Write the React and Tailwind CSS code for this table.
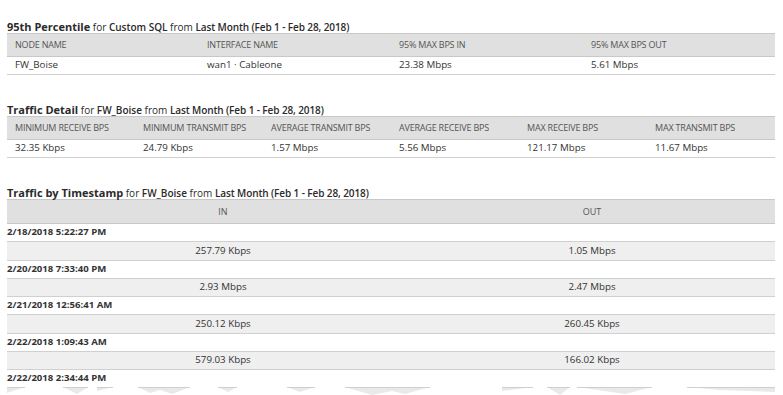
import React from "react";

const F = "font-['Open_Sans','Liberation_Sans',sans-serif]";

function Title({ main, node }) {
  return (
    <div className="h-[15px] leading-[15px] whitespace-nowrap text-[#2a2a2a]">
      <span className="text-[11px] font-bold">{main}</span>
      <span className="text-[10px]"> for </span>
      <span className="text-[10px] font-semibold">{node}</span>
      <span className="text-[10px]"> from </span>
      <span className="text-[10px] font-semibold tracking-[-0.1px]">Last Month (Feb 1 - Feb 28, 2018)</span>
    </div>
  );
}

function SimpleTable({ cols, headers, values }) {
  return (
    <div>
      <div className={`grid ${cols} h-[24px] items-center bg-[#e0e0e0] border-t border-b border-[#c8c8c8] text-[9px] text-[#555] tracking-[-0.2px]`}>
        {headers.map((h) => (
          <div key={h} className="pl-[8px] whitespace-nowrap">{h}</div>
        ))}
      </div>
      <div className={`grid ${cols} h-[18px] items-center border-b border-[#d0d0d0] text-[9.75px] text-[#333]`}>
        {values.map((v, i) => (
          <div key={i} className="pl-[8px] whitespace-nowrap">{v}</div>
        ))}
      </div>
    </div>
  );
}

const stamps = [
  ["2/18/2018 5:22:27 PM", "257.79 Kbps", "1.05 Mbps"],
  ["2/20/2018 7:33:40 PM", "2.93 Mbps", "2.47 Mbps"],
  ["2/21/2018 12:56:41 AM", "250.12 Kbps", "260.45 Kbps"],
  ["2/22/2018 1:09:43 AM", "579.03 Kbps", "166.02 Kbps"],
];

const tears = [
  "7,0 25,0 7,6",
  "63,0 88,0 77,7",
  "97,0 113,0 97,4",
  "138,0 190,0 180,4 172,7 160,3 150,6",
  "218,0 237,0 228,5",
  "287,0 315,0 300,5",
  "345,0 430,0 405,7 392,4 372,8",
  "502,0 533,0 502,4",
  "547,0 570,0 560,8",
  "577,0 652,0 625,7",
  "687,0 775,0 775,5 720,3",
];

function Torn() {
  return (
    <svg width="783" height="10" viewBox="0 0 783 10" className="block -ml-[7px]">
      {tears.map((p, i) => {
        const pts = p.split(" ").map((s) => s.split(",").map(Number));
        const x1 = pts[0][0];
        const x2 = pts[1][0];
        return (
          <g key={i}>
            <polygon points={p} fill="#e9e9e9" />
            <line x1={x1} y1="0.5" x2={x2} y2="0.5" stroke="#cfcfcf" strokeWidth="1" />
          </g>
        );
      })}
    </svg>
  );
}

export default function App() {
  return (
    <div className={`w-[783px] h-[395px] overflow-hidden bg-white ${F}`}>
      <div className="pl-[7px] pr-[8px] pt-[18px]">
        <Title main="95th Percentile" node="Custom SQL" />
        <SimpleTable
          cols="grid-cols-4"
          headers={["NODE NAME", "INTERFACE NAME", "95% MAX BPS IN", "95% MAX BPS OUT"]}
          values={["FW_Boise", "wan1 · Cableone", "23.38 Mbps", "5.61 Mbps"]}
        />
        <div className="h-[26px]" />
        <Title main="Traffic Detail" node="FW_Boise" />
        <SimpleTable
          cols="grid-cols-6"
          headers={[
            "MINIMUM RECEIVE BPS",
            "MINIMUM TRANSMIT BPS",
            "AVERAGE TRANSMIT BPS",
            "AVERAGE RECEIVE BPS",
            "MAX RECEIVE BPS",
            "MAX TRANSMIT BPS",
          ]}
          values={["32.35 Kbps", "24.79 Kbps", "1.57 Mbps", "5.56 Mbps", "121.17 Mbps", "11.67 Mbps"]}
        />
        <div className="h-[26px]" />
        <Title main="Traffic by Timestamp" node="FW_Boise" />
        <div>
          <div className="grid grid-cols-[30px_372px_366px] h-[25px] items-center bg-[#e0e0e0] border-t border-b border-[#c8c8c8] text-[9px] text-[#555]">
            <div />
            <div className="text-center">IN</div>
            <div className="text-center">OUT</div>
          </div>
          {stamps.map(([ts, a, b]) => (
            <React.Fragment key={ts}>
              <div className="h-[18.25px] flex items-center border-b border-[#d0d0d0] text-[9.6px] font-bold text-[#333]">
                {ts}
              </div>
              <div className="grid grid-cols-[30px_372px_366px] h-[18.25px] items-center bg-[#efefef] border-b border-[#d0d0d0] text-[9.75px] text-[#333]">
                <div />
                <div className="text-center">{a}</div>
                <div className="text-center">{b}</div>
              </div>
            </React.Fragment>
          ))}
          <div className="h-[17px] flex items-center text-[9.6px] font-bold text-[#333]">2/22/2018 2:34:44 PM</div>
          <Torn />
        </div>
      </div>
    </div>
  );
}
